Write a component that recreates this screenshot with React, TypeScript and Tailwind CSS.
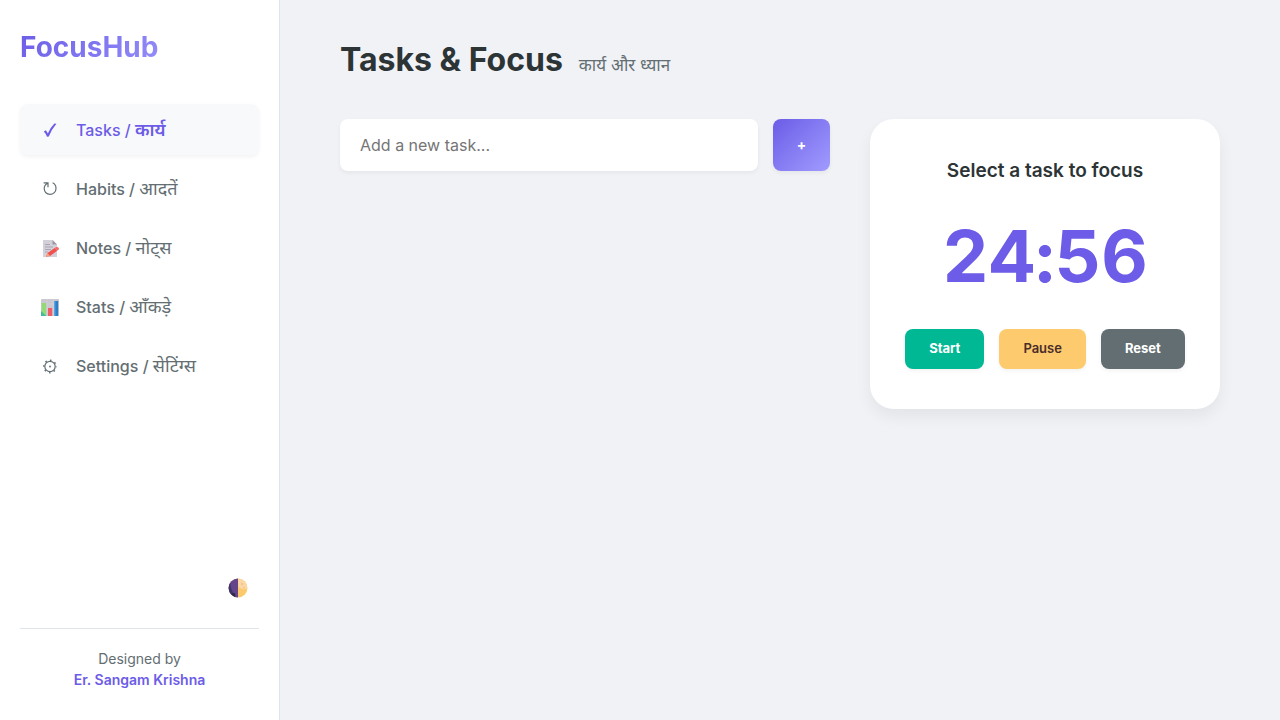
import type { ReactNode } from "react";

function CheckIcon() {
  return (
    <svg viewBox="0 0 20 20" className="size-5" fill="currentColor" aria-hidden="true">
      <path d="M3.8 11.4 5.8 10.2 Q7 11.6 7.8 13.4 Q10.6 7.4 14.4 3.6 L16.4 3.8 Q11.6 9.4 8.8 16.6 L7 16.8 Q6 13.6 3.8 11.4Z" />
    </svg>
  );
}

function HabitIcon() {
  return (
    <svg viewBox="0 0 20 20" className="size-5" fill="none" stroke="currentColor" strokeWidth="1.2" aria-hidden="true">
      <path d="M3.6 3.8H8V8.2M7.6 4.2C5.2 5.4 4.2 7.6 4.2 9.6C4.2 13 6.8 15.4 10 15.4C13.4 15.4 16 12.8 16 9.4C16 6.8 14.8 4.8 12.6 3.8" />
    </svg>
  );
}

function NoteIcon() {
  return (
    <svg viewBox="0 0 20 20" className="size-5" aria-hidden="true">
      <path d="M3 2H12.5L17 6.5V19H3Z" fill="#d3d0d9" />
      <path d="M12.5 2V6.5H17Z" fill="#9b98a6" />
      <path d="M5 6.5H10M5 9H13M5 11.5H11M5 14H8" stroke="#aaa7b3" strokeWidth="1" />
      <path d="M6 18.8 7.6 15 14.6 10 17.2 12.8 10 18Z" fill="#f0504e" />
      <path d="M14.6 10 16.6 8.8Q18.8 9 19.2 11L17.2 12.8Z" fill="#f26a6a" />
      <path d="M6 18.8 7.6 15 10 18Z" fill="#f9a27c" />
    </svg>
  );
}

function StatsIcon() {
  return (
    <svg viewBox="0 0 20 20" className="size-5" aria-hidden="true">
      <rect x="1" y="2" width="18" height="17" rx="1" fill="#cbc7d1" />
      <path d="M1 7H19M1 12H19M7 2V19M13 2V19" stroke="#d8d4de" strokeWidth="0.6" />
      <rect x="1.6" y="6" width="4.6" height="13" fill="#93d977" />
      <path d="M1 14 6.2 19H1Z" fill="#45b8a0" />
      <rect x="8" y="11" width="4.2" height="8" fill="#f05c66" />
      <rect x="14" y="4" width="4.2" height="15" fill="#2f7fc6" />
      <rect x="14" y="4" width="1.4" height="15" fill="#5aa5e0" />
    </svg>
  );
}

function GearIcon() {
  return (
    <svg viewBox="0 0 20 20" className="size-5" fill="none" stroke="currentColor" aria-hidden="true">
      <circle cx="10" cy="10.5" r="5.2" strokeWidth="1.2" />
      <circle cx="10" cy="10.5" r="6.2" strokeWidth="1.4" strokeDasharray="1.6 3.27" strokeDashoffset="0.8" />
      <circle cx="10" cy="10.5" r="0.9" fill="currentColor" stroke="none" />
    </svg>
  );
}

function MoonIcon() {
  return (
    <svg viewBox="0 0 20 20" className="size-5" aria-hidden="true">
      <circle cx="10" cy="10" r="9.4" fill="#fcc96c" />
      <path d="M10 .6A9.4 9.4 0 0 1 19.4 10Q16 13 10.4 9Z" fill="#fbd8a4" />
      <circle cx="14" cy="6" r="1.2" fill="#f3c48f" />
      <circle cx="16" cy="9.6" r="1" fill="#f5c891" />
      <path d="M10 .6A9.4 9.4 0 0 0 10 19.4Z" fill="#66448c" />
      <path d="M2.4 4.6A9.4 9.4 0 0 0 7 18.9L6.4 16.4Q2.6 12 2.4 4.6Z" fill="#3b3568" />
      <path d="M4 15.4 7 15 7.4 19Q5.4 18.2 4 16.8Z" fill="#2e2a40" />
    </svg>
  );
}

const NAV: { label: string; hindi: string; icon: ReactNode; active?: boolean }[] = [
  { label: "Tasks", hindi: "कार्य", icon: <CheckIcon />, active: true },
  { label: "Habits", hindi: "आदतें", icon: <HabitIcon /> },
  { label: "Notes", hindi: "नोट्स", icon: <NoteIcon /> },
  { label: "Stats", hindi: "आँकड़े", icon: <StatsIcon /> },
  { label: "Settings", hindi: "सेटिंग्स", icon: <GearIcon /> },
];

const CONTROLS = [
  { label: "Start", style: "bg-[#00b894] font-bold text-white" },
  { label: "Pause", style: "bg-[#fdcb6e] font-semibold text-[#4a2c2a]" },
  { label: "Reset", style: "bg-[#636e72] font-bold text-white" },
];

export default function App() {
  return (
    <div className="flex min-h-screen bg-[#f0f2f6] font-['Inter','Noto_Sans',sans-serif] text-[#2d3436]">
      <aside className="flex w-70 shrink-0 flex-col border-r border-[#dfe6e9] bg-white px-5 py-[30px]">
        <div className="self-start bg-linear-135 from-[#6c5ce7] to-[#a29bfe] to-130% bg-clip-text text-[28px] leading-[34px] font-bold text-transparent">
          FocusHub
        </div>
        <nav className="mt-10 flex flex-col gap-2">
          {NAV.map((item) => (
            <a
              key={item.label}
              href="#"
              className={
                item.active
                  ? "flex h-[51px] items-center gap-4 rounded-lg bg-[#f8f9fb] px-5 font-medium text-[#6c5ce7] shadow-[0_2px_4px_rgba(0,0,0,0.05)]"
                  : "flex h-[51px] items-center gap-4 rounded-lg px-5 font-medium text-[#636e72]"
              }
            >
              {item.icon}
              <span className="leading-6">
                {item.label} /{" "}
                <span
                  lang="hi"
                  className={item.active ? "text-[18px] leading-none font-semibold" : "text-[18px] leading-none font-normal"}
                >
                  {item.hindi}
                </span>
              </span>
            </a>
          ))}
        </nav>
        <button type="button" aria-label="Toggle theme" className="mt-auto mr-[11px] self-end">
          <MoonIcon />
        </button>
        <footer className="mt-[30px] border-t border-[#dfe6e9] pt-[19px] text-center text-sm leading-[21px] text-[#636e72]">
          Designed by
          <br />
          <strong className="font-semibold text-[#6c5ce7]">Er. Sangam Krishna</strong>
        </footer>
      </aside>

      <main className="min-w-0 flex-1 px-15 py-10">
        <header className="flex items-baseline gap-4">
          <h1 className="text-[32px] leading-[39px] font-bold">Tasks &amp; Focus</h1>
          <span lang="hi" className="text-[17px] leading-6 text-[#636e72]">
            कार्य और ध्यान
          </span>
        </header>
        <div className="mt-10 flex items-start gap-10">
          <form className="flex min-w-0 flex-1 gap-[15px]">
            <input
              type="text"
              aria-label="New task"
              placeholder="Add a new task..."
              className="h-[52px] min-w-0 flex-1 rounded-lg bg-white px-5 text-base shadow-[0_2px_4px_rgba(0,0,0,0.05)] placeholder:text-[#757575]"
            />
            <button
              type="button"
              aria-label="Add task"
              className="w-[57px] rounded-lg bg-linear-135 from-[#6c5ce7] to-[#a29bfe] text-sm font-bold text-white shadow-[0_2px_4px_rgba(0,0,0,0.05)]"
            >
              +
            </button>
          </form>
          <section className="w-[350px] shrink-0 rounded-3xl bg-white px-[34px] py-10 text-center shadow-[0_8px_16px_rgba(0,0,0,0.06)]">
            <h2 className="text-[19px] leading-[23px] font-semibold">Select a task to focus</h2>
            <div className="mt-[30px] text-[72px] leading-[87px] font-bold text-[#6c5ce7] tabular-nums [font-variant-ligatures:no-contextual]">
              24:56
            </div>
            <div className="mt-[30px] flex justify-center gap-[15px]">
              {CONTROLS.map((c) => (
                <button
                  key={c.label}
                  type="button"
                  className={`h-10 rounded-lg px-6 text-[13px] shadow-[0_2px_4px_rgba(0,0,0,0.05)] ${c.style}`}
                >
                  {c.label}
                </button>
              ))}
            </div>
          </section>
        </div>
      </main>
    </div>
  );
}
